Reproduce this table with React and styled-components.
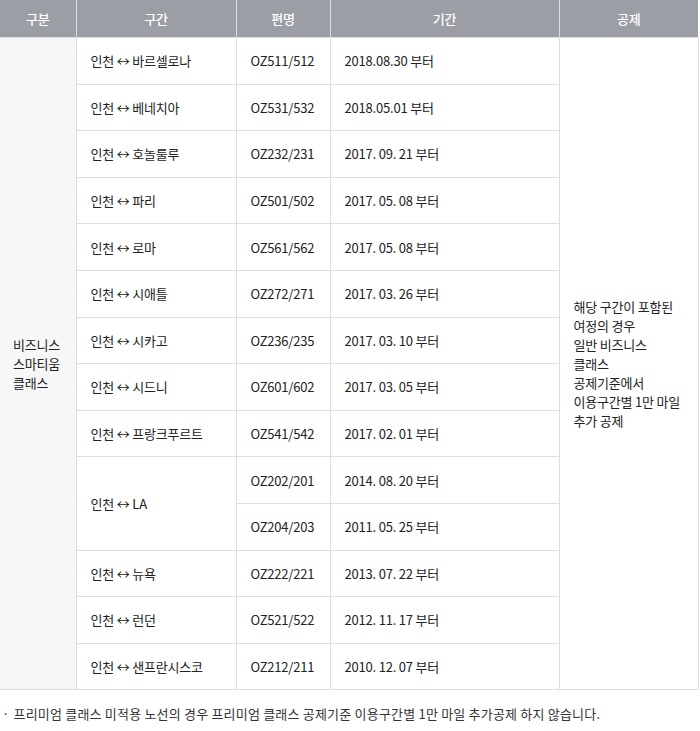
import React from "react";
import styled, { createGlobalStyle } from "styled-components";

const GlobalStyle = createGlobalStyle`
  body {
    margin: 0;
    background: #fff;
    font-family: "Noto Sans CJK KR", "Noto Sans", sans-serif;
    color: #222;
  }
`;

const Wrapper = styled.div`
  width: 698px;
`;

const Table = styled.table`
  width: 698px;
  border-collapse: collapse;
  table-layout: fixed;
  font-size: 13px;
  letter-spacing: -0.2px;
`;

const HeadCell = styled.th`
  height: 37px;
  padding: 0;
  background: #9b9ea5;
  color: #fff;
  font-weight: 500;
  text-align: center;
  border-left: 1px solid #dcdcdc;
  &:first-child {
    border-left: none;
  }
`;

const Cell = styled.td`
  height: 45.6px;
  padding: 0 0 0 14px;
  border: 1px solid #dedede;
  text-align: left;
  vertical-align: middle;
  line-height: 19px;
  background: #fff;
  &:first-child {
    border-left: none;
  }
`;

const SideCell = styled(Cell)`
  padding-left: 13px;
  background: #f7f7f7;
`;

const Note = styled.p`
  margin: 14px 0 0;
  padding-left: 2px;
  font-size: 13px;
  color: #333;
  letter-spacing: 0.2px;
`;

const Dot = styled.span`
  margin-right: 4px;
`;

const routes = [
  { route: "바르셀로나", flights: [["OZ511/512", "2018.08.30 부터"]] },
  { route: "베네치아", flights: [["OZ531/532", "2018.05.01 부터"]] },
  { route: "호놀룰루", flights: [["OZ232/231", "2017. 09. 21 부터"]] },
  { route: "파리", flights: [["OZ501/502", "2017. 05. 08 부터"]] },
  { route: "로마", flights: [["OZ561/562", "2017. 05. 08 부터"]] },
  { route: "시애틀", flights: [["OZ272/271", "2017. 03. 26 부터"]] },
  { route: "시카고", flights: [["OZ236/235", "2017. 03. 10 부터"]] },
  { route: "시드니", flights: [["OZ601/602", "2017. 03. 05 부터"]] },
  { route: "프랑크푸르트", flights: [["OZ541/542", "2017. 02. 01 부터"]] },
  {
    route: "LA",
    flights: [
      ["OZ202/201", "2014. 08. 20 부터"],
      ["OZ204/203", "2011. 05. 25 부터"],
    ],
  },
  { route: "뉴욕", flights: [["OZ222/221", "2013. 07. 22 부터"]] },
  { route: "런던", flights: [["OZ521/522", "2012. 11. 17 부터"]] },
  { route: "샌프란시스코", flights: [["OZ212/211", "2010. 12. 07 부터"]] },
];

const totalRows = routes.reduce((n, r) => n + r.flights.length, 0);

export default function App() {
  const rows = [];
  routes.forEach((r, i) => {
    r.flights.forEach((f, j) => {
      rows.push(
        <tr key={`${i}-${j}`}>
          {i === 0 && j === 0 && (
            <SideCell rowSpan={totalRows}>
              비즈니스
              <br />
              스마티움
              <br />
              클래스
            </SideCell>
          )}
          {j === 0 && (
            <Cell rowSpan={r.flights.length}>인천 ↔ {r.route}</Cell>
          )}
          <Cell>{f[0]}</Cell>
          <Cell>{f[1]}</Cell>
          {i === 0 && j === 0 && (
            <Cell rowSpan={totalRows}>
              해당 구간이 포함된
              <br />
              여정의 경우
              <br />
              일반 비즈니스
              <br />
              클래스
              <br />
              공제기준에서
              <br />
              이용구간별 1만 마일
              <br />
              추가 공제
            </Cell>
          )}
        </tr>
      );
    });
  });

  return (
    <>
      <GlobalStyle />
      <Wrapper>
        <Table>
          <colgroup>
            <col style={{ width: 76 }} />
            <col style={{ width: 160 }} />
            <col style={{ width: 94 }} />
            <col style={{ width: 229 }} />
            <col style={{ width: 139 }} />
          </colgroup>
          <thead>
            <tr>
              <HeadCell>구분</HeadCell>
              <HeadCell>구간</HeadCell>
              <HeadCell>편명</HeadCell>
              <HeadCell>기간</HeadCell>
              <HeadCell>공제</HeadCell>
            </tr>
          </thead>
          <tbody>{rows}</tbody>
        </Table>
        <Note>
          <Dot>·</Dot>
          프리미엄 클래스 미적용 노선의 경우 프리미엄 클래스 공제기준 이용구간별 1만 마일 추가공제 하지 않습니다.
        </Note>
      </Wrapper>
    </>
  );
}
